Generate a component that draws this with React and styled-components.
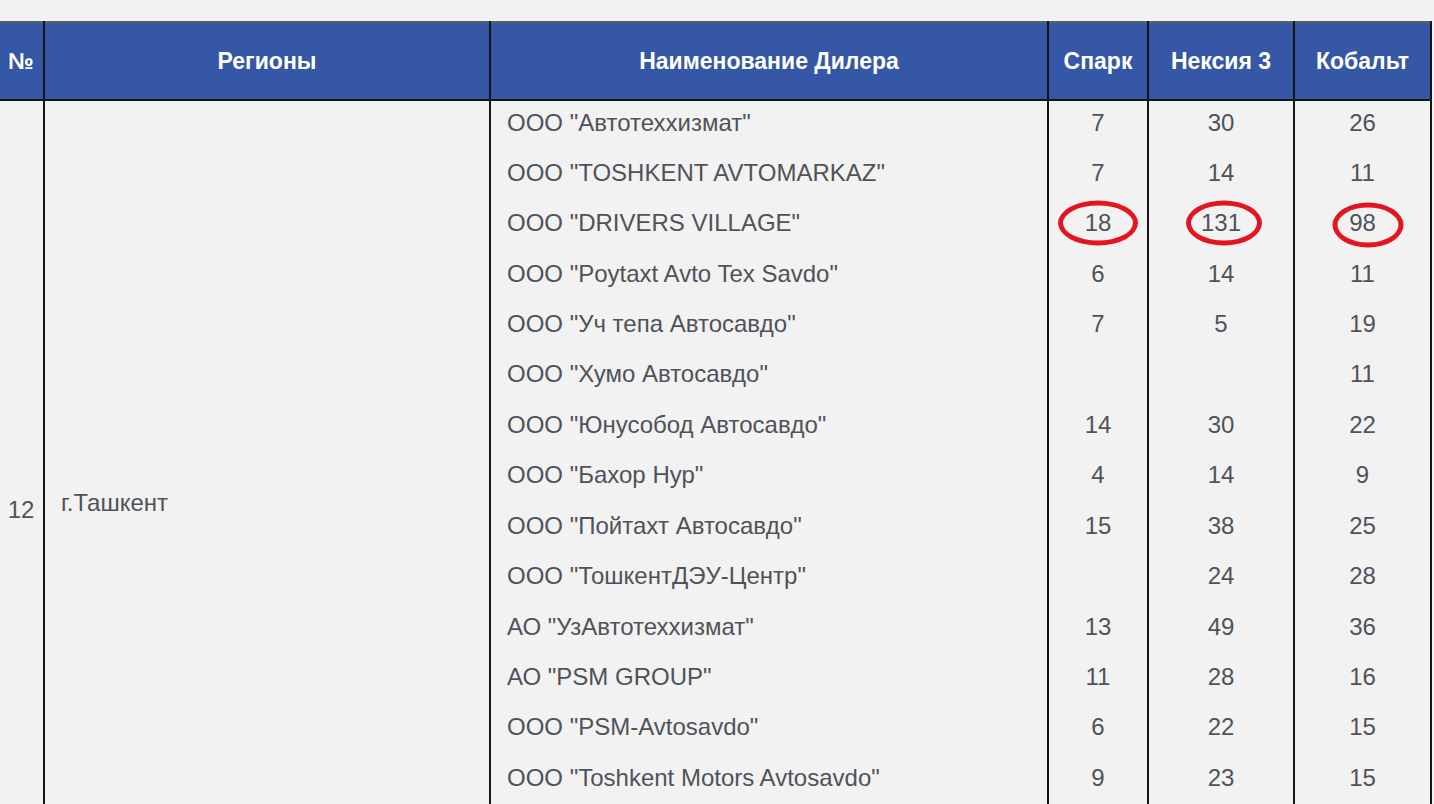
import React from "react";
import styled, { createGlobalStyle } from "styled-components";

const GlobalStyle = createGlobalStyle`
  html, body {
    margin: 0;
    padding: 0;
    height: 804px;
    overflow: hidden;
    background: #f2f2f2;
    font-family: "Liberation Sans", Arial, sans-serif;
  }
`;

const dealers = [
  { name: 'ООО "Автотехxизмат"', spark: "7", nexia: "30", cobalt: "26" },
  { name: 'ООО "TOSHKENT AVTOMARKAZ"', spark: "7", nexia: "14", cobalt: "11" },
  { name: 'ООО "DRIVERS VILLAGE"', spark: "18", nexia: "131", cobalt: "98", marked: true },
  { name: 'ООО "Poytaxt Avto Tex Savdo"', spark: "6", nexia: "14", cobalt: "11" },
  { name: 'ООО "Уч тепа Автосавдо"', spark: "7", nexia: "5", cobalt: "19" },
  { name: 'ООО "Хумо Автосавдо"', spark: "", nexia: "", cobalt: "11" },
  { name: 'ООО "Юнусобод Автосавдо"', spark: "14", nexia: "30", cobalt: "22" },
  { name: 'ООО "Бахор Нур"', spark: "4", nexia: "14", cobalt: "9" },
  { name: 'ООО "Пойтахт Автосавдо"', spark: "15", nexia: "38", cobalt: "25" },
  { name: 'ООО "ТошкентДЭУ-Центр"', spark: "", nexia: "24", cobalt: "28" },
  { name: 'АО "УзАвтотехxизмат"', spark: "13", nexia: "49", cobalt: "36" },
  { name: 'АО "PSM GROUP"', spark: "11", nexia: "28", cobalt: "16" },
  { name: 'ООО "PSM-Avtosavdo"', spark: "6", nexia: "22", cobalt: "15" },
  { name: 'ООО "Toshkent Motors Avtosavdo"', spark: "9", nexia: "23", cobalt: "15" },
];

const Page = styled.div`
  padding-top: 21px;
`;

const Table = styled.table`
  border-collapse: collapse;
  table-layout: fixed;
  width: 1432px;
  margin-left: -1px;
`;

const HeadCell = styled.th`
  height: 76px;
  padding: 0 6px;
  background: #3557a5;
  color: #ffffff;
  font-size: 23px;
  font-weight: bold;
  text-align: center;
  vertical-align: middle;
  border-top: 2px solid #5a5f6a;
  border-bottom: 2px solid #151515;
  border-left: 2px solid #151515;
  border-right: 2px solid #151515;
  &:first-child {
    border-left: none;
  }
`;

const Row = styled.tr`
  height: 50.45px;
`;

const Cell = styled.td`
  padding: 0 ${(p) => (p.$align === "left" ? "16px" : "2px")} 6px;
  color: #505259;
  font-size: 24px;
  text-align: ${(p) => p.$align || "center"};
  vertical-align: middle;
  border-left: 2px solid #151515;
  border-right: 2px solid #151515;
  white-space: nowrap;
  &:first-child {
    border-left: none;
  }
`;

const SpanCell = styled(Cell)`
  padding-top: ${(p) => p.$shift}px;
  padding-bottom: 0;
`;

const Mark = styled.span`
  position: relative;
  display: inline-block;
  &::after {
    content: "";
    position: absolute;
    left: 50%;
    top: 50%;
    box-sizing: border-box;
    width: ${(p) => p.$w}px;
    height: 45px;
    transform: translate(calc(-50% + ${(p) => p.$dx}px), calc(-50% + ${(p) => p.$dy}px));
    border: 5px solid #e3161f;
    border-radius: 50%;
  }
`;

function Value({ value, marked, w, dx = 0, dy = 0 }) {
  if (marked)
    return (
      <Mark $w={w} $dx={dx} $dy={dy}>
        {value}
      </Mark>
    );
  return value;
}

export default function App() {
  return (
    <>
      <GlobalStyle />
      <Page>
        <Table>
          <colgroup>
            <col style={{ width: 45 }} />
            <col style={{ width: 446 }} />
            <col style={{ width: 558 }} />
            <col style={{ width: 100 }} />
            <col style={{ width: 146 }} />
            <col style={{ width: 137 }} />
          </colgroup>
          <thead>
            <tr>
              <HeadCell>№</HeadCell>
              <HeadCell>Регионы</HeadCell>
              <HeadCell>Наименование Дилера</HeadCell>
              <HeadCell>Спарк</HeadCell>
              <HeadCell>Нексия 3</HeadCell>
              <HeadCell>Кобальт</HeadCell>
            </tr>
          </thead>
          <tbody>
            {dealers.map((d, i) => (
              <Row key={d.name}>
                {i === 0 && (
                  <>
                    <SpanCell rowSpan={dealers.length} $shift={112}>
                      12
                    </SpanCell>
                    <SpanCell rowSpan={dealers.length} $shift={98} $align="left">
                      г.Ташкент
                    </SpanCell>
                  </>
                )}
                <Cell $align="left">{d.name}</Cell>
                <Cell>
                  <Value value={d.spark} marked={d.marked} w={80} />
                </Cell>
                <Cell>
                  <Value value={d.nexia} marked={d.marked} w={76} dx={3} />
                </Cell>
                <Cell>
                  <Value value={d.cobalt} marked={d.marked} w={71} dx={6} dy={2} />
                </Cell>
              </Row>
            ))}
          </tbody>
        </Table>
      </Page>
    </>
  );
}
